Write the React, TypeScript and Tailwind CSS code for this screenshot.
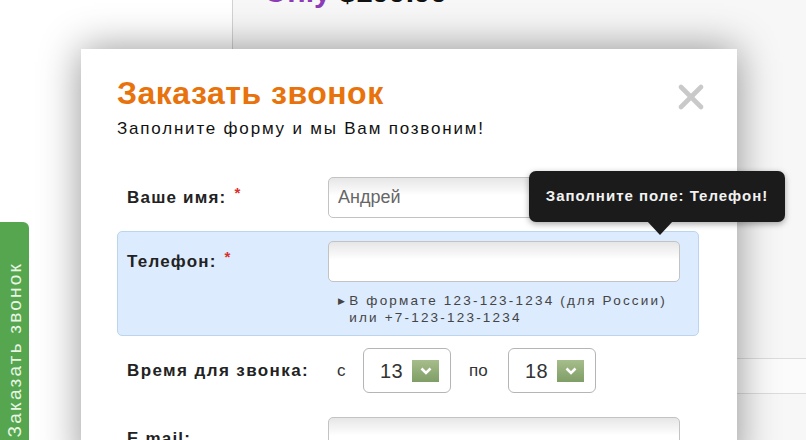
import { X } from "lucide-react"

/**
 * CallbackModal
 *
 * Модальное окно "Заказать звонок" поверх страницы товара,
 * с подсказкой о незаполненном поле телефона.
 */

function Field({ value, placeholder }: { value?: string; placeholder?: string }) {
    return (
        <div className="flex h-[41px] w-[352px] items-center rounded-[5px] border border-[#c3c3c3] bg-linear-to-b from-[#e6e6e6] via-white via-45% to-white px-[9px] text-[18px] text-[#666]">
            {value ?? placeholder ?? ""}
        </div>
    )
}

function Label({ text }: { text: string }) {
    return (
        <div className="flex h-[41px] w-[201px] shrink-0 items-center text-[17px] font-bold tracking-[1.2px] text-[#222]">
            <span>{text}</span>
            <span className="ml-[8px] -mt-[8px] text-[15px] text-[#d9302c]">*</span>
        </div>
    )
}

function HourSelect({ value }: { value: string }) {
    return (
        <div className="flex h-[45px] w-[88px] items-center rounded-[6px] border border-[#b5b5b5] bg-white pl-[16px]">
            <span className="text-[20px] tracking-[0.5px] text-[#333]">{value}</span>
            <span className="ml-[9px] flex h-[22px] w-[27px] items-center justify-center bg-linear-to-b from-[#a6bd8b] to-[#7f9e66]">
                <svg width="12" height="8" viewBox="0 0 12 8">
                    <path d="M1.5 1.5 L6 6 L10.5 1.5" fill="none" stroke="white" strokeWidth="2.6" />
                </svg>
            </span>
        </div>
    )
}

export default function App() {
    return (
        <div className="relative h-[440px] w-[806px] overflow-hidden bg-white font-['Liberation_Sans',Arial,sans-serif]">
            {/* Page behind the modal */}
            <div className="flex h-full">
                <div className="w-[233px] shrink-0 border-r border-[#d2d2d2] bg-white" />
                <div className="flex-1 bg-[#f7f7f7]">
                    <div className="-mt-[25px] pl-[31px] text-[30px] font-bold leading-[34px]">
                        <span className="text-[#8e3bb8]">Only</span>{" "}
                        <span className="text-[#111]">$199.99</span>
                    </div>
                    <div className="mt-[349px] h-[36px] border-y border-[#dcdcdc] bg-[#fbfbfb]" />
                </div>
            </div>

            {/* Side tab */}
            <div className="absolute left-0 top-[222px] flex h-[240px] w-[29px] items-start justify-center rounded-tr-[6px] bg-[#55a64f] pt-[40px]">
                <div className="rotate-180 text-[19px] leading-[19px] tracking-[2.2px] text-[#e9f5e4] [writing-mode:vertical-rl]">
                    Заказать звонок
                </div>
            </div>

            {/* Modal */}
            <div className="absolute left-[81px] top-[49px] h-[420px] w-[656px] bg-white pl-[36px] pt-[27px] shadow-[0_0_38px_rgba(0,0,0,0.42)]">
                <X className="absolute left-[590px] top-[28px] h-[40px] w-[40px] text-[#c9c9c9]" strokeWidth={2.8} />

                <h1 className="text-[32px] font-bold leading-[34px] tracking-[0.5px] text-[#e8720c]">Заказать звонок</h1>
                <p className="mt-[9px] text-[17px] leading-[20px] tracking-[1.8px] text-[#111]">
                    Заполните форму и мы Вам позвоним!
                </p>

                <div className="mt-[38px] flex w-[582px] flex-col">
                    <div className="flex px-[10px]">
                        <Label text="Ваше имя:" />
                        <Field value="Андрей" />
                    </div>

                    <div className="mt-[13px] flex h-[105px] rounded-[5px] border border-[#bcd5ef] bg-[#dcebfd] px-[9px] pt-[9px]">
                        <Label text="Телефон:" />
                        <div className="flex flex-col">
                            <Field />
                            <div className="mt-[10px] flex pl-[10px] text-[13.5px] leading-[17px] tracking-[2.2px] text-[#444]">
                                <span className="mr-[2px] mt-[1px] text-[9px]">▶</span>
                                <span>
                                    В формате 123-123-1234 (для России)
                                    <br />
                                    или +7-123-123-1234
                                </span>
                            </div>
                        </div>
                    </div>

                    <div className="mt-[12px] flex items-center px-[10px]">
                        <div className="flex h-[45px] w-[201px] shrink-0 items-center text-[17px] font-bold tracking-[1.4px] text-[#222]">
                            Время для звонка:
                        </div>
                        <span className="ml-[9px] w-[26px] text-[17px] text-[#333]">с</span>
                        <HourSelect value="13" />
                        <span className="ml-[18px] w-[39px] text-[17px] text-[#333]">по</span>
                        <HourSelect value="18" />
                    </div>

                    <div className="mt-[24px] flex px-[10px]">
                        <div className="flex h-[41px] w-[201px] shrink-0 items-center pt-[2px] text-[17px] font-bold tracking-[1.2px] text-[#222]">
                            E mail:
                        </div>
                        <Field />
                    </div>
                </div>

                {/* Tooltip */}
                <div className="absolute left-[448px] top-[122px] flex h-[51px] w-[256px] items-center justify-center rounded-[7px] bg-[#1b1b1b] text-[15px] font-bold tracking-[1px] text-[#f2f2f2] shadow-[0_2px_6px_rgba(0,0,0,0.35)]">
                    Заполните поле: Телефон!
                    <span className="absolute left-[118px] top-[50px] h-0 w-0 border-x-[13px] border-t-[14px] border-x-transparent border-t-[#1b1b1b]" />
                </div>
            </div>
        </div>
    )
}
